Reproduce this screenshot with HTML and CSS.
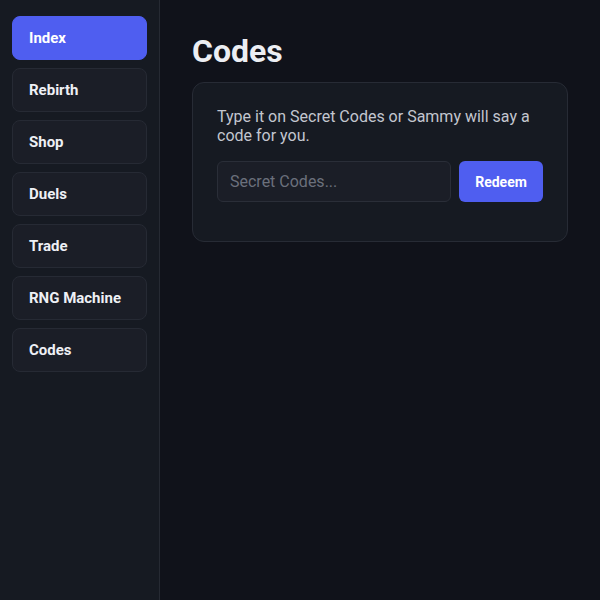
FILE: index.html
```html
<!DOCTYPE html>
<html>
<head>
<meta charset="utf-8">
<link rel="stylesheet" href="styles.css">
</head>
<body>
<div class="app">
  <nav class="sidebar">
    <button class="nav-btn active">Index</button>
    <button class="nav-btn">Rebirth</button>
    <button class="nav-btn">Shop</button>
    <button class="nav-btn">Duels</button>
    <button class="nav-btn">Trade</button>
    <button class="nav-btn">RNG Machine</button>
    <button class="nav-btn">Codes</button>
  </nav>
  <main class="main">
    <h1 class="title">Codes</h1>
    <section class="card">
      <p class="desc">Type it on Secret Codes or Sammy will say a code for you.</p>
      <div class="row">
        <input class="code-input" type="text" placeholder="Secret Codes...">
        <button class="redeem">Redeem</button>
      </div>
    </section>
  </main>
</div>
</body>
</html>
```
FILE: styles.css
```css
* { box-sizing: border-box; }
html, body {
  margin: 0;
  height: 100%;
  background: #10121a;
  font-family: Roboto, "Noto Sans", sans-serif;
}
.app {
  display: flex;
  height: 600px;
}
.sidebar {
  width: 160px;
  flex: none;
  background: #161a22;
  border-right: 1px solid #262a33;
  padding: 16px 12px;
  display: flex;
  flex-direction: column;
  gap: 8px;
}
.nav-btn {
  height: 44px;
  text-align: left;
  padding: 0 16px;
  background: #1b1e27;
  border: 1px solid #262a34;
  border-radius: 8px;
  color: #eef0f5;
  font-family: Roboto, sans-serif;
  font-weight: 700;
  font-size: 15px;
}
.nav-btn.active {
  background: #4f5ef0;
  border-color: #4f5ef0;
  color: #ffffff;
}
.main {
  flex: 1;
  padding: 32px 32px 0 32px;
}
.title {
  margin: 0 0 12px;
  font-size: 32px;
  font-weight: 700;
  color: #eceef3;
  line-height: normal;
}
.card {
  background: #161a22;
  border: 1px solid #272b35;
  border-radius: 12px;
  padding: 24px 24px 39px;
}
.desc {
  margin: 0 0 16px;
  font-size: 16px;
  line-height: 19px;
  color: #c3c6cf;
}
.row {
  display: flex;
  gap: 8px;
}
.code-input {
  flex: 1;
  min-width: 0;
  height: 41px;
  background: #1b1e27;
  border: 1px solid #2a2e38;
  border-radius: 6px;
  padding: 0 12px;
  font-family: Roboto, sans-serif;
  font-size: 16px;
  color: #e5e7ec;
  outline: none;
}
.code-input::placeholder { color: #6b707c; }
.redeem {
  width: 84px;
  height: 41px;
  background: #4f5ef0;
  border: none;
  border-radius: 6px;
  color: #fff;
  font-family: Roboto, sans-serif;
  font-weight: 700;
  font-size: 14px;
}
```
